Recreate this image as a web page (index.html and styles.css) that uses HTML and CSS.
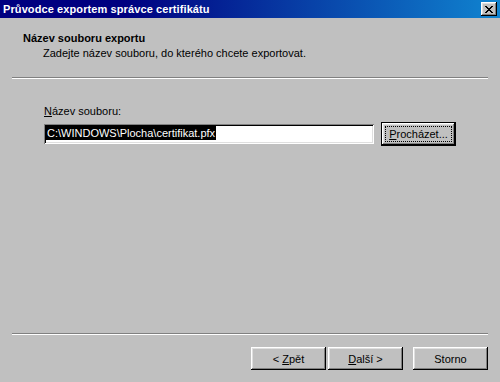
FILE: index.html
```html
<!DOCTYPE html>
<html lang="cs">
<head>
    <meta charset="UTF-8">
    <title>Průvodce exportem správce certifikátu</title>
    <link rel="stylesheet" href="styles.css">
</head>
<body>
    <div class="window">
        <div class="titlebar">
            <span class="title">Průvodce exportem správce certifikátu</span>
            <button class="close-button">
                <svg width="8" height="7" viewBox="0 0 8 7">
                    <path d="M0 0h2v1h1v1h2v-1h1v-1h2v1h-1v1h-1v1h-1v1h1v1h1v1h1v1h-2v-1h-1v-1h-2v1h-1v1h-2v-1h1v-1h1v-1h1v-1h-1v-1h-1v-1h-1z" fill="#000"/>
                </svg>
            </button>
        </div>

        <div class="page-header">
            <div class="header-title">Název souboru exportu</div>
            <div class="header-text">Zadejte název souboru, do kterého chcete exportovat.</div>
        </div>
        <div class="separator"></div>

        <div class="page-content">
            <label class="field-label"><u>N</u>ázev souboru:</label>
            <div class="file-row">
                <div class="text-input"><span class="selected">C:\WINDOWS\Plocha\certifikat.pfx</span></div>
                <button class="button default"><span class="focus"><u>P</u>rocházet...</span></button>
            </div>
        </div>

        <div class="separator"></div>
        <div class="footer">
            <button class="button">&lt; <u>Z</u>pět</button>
            <button class="button"><u>D</u>alší &gt;</button>
            <button class="button cancel">Storno</button>
        </div>
    </div>
</body>
</html>
```

FILE: styles.css
```css
html, body {
    margin: 0;
    height: 100%;
}
body {
    font-family: "Liberation Sans", Arial, sans-serif;
    font-size: 11px;
    line-height: 13px;
    color: #000;
    background: #c0c0c0;
}
.window {
    height: 382px;
    display: flex;
    flex-direction: column;
    background: #c0c0c0;
}
.titlebar {
    height: 18px;
    flex: none;
    display: flex;
    align-items: center;
    justify-content: space-between;
    padding: 0 3px;
    background: linear-gradient(90deg, #000080 0%, #000080 25%, #1084d0 100%);
}
.title {
    color: #fff;
    font-weight: bold;
    font-size: 11px;
    letter-spacing: 0.1px;
}
.close-button {
    width: 16px;
    height: 14px;
    padding: 0;
    border: none;
    background: #c0c0c0;
    display: flex;
    align-items: center;
    justify-content: center;
    box-shadow: inset -1px -1px #000, inset 1px 1px #fff, inset -2px -2px #808080, inset 2px 2px #dfdfdf;
}
.page-header {
    height: 59px;
    box-sizing: border-box;
    padding: 14px 0 0 23px;
    flex: none;
}
.header-title {
    font-weight: bold;
}
.header-text {
    margin-top: 2px;
    padding-left: 20px;
}
.separator {
    flex: none;
    margin: 0 12px;
    border-top: 1px solid #808080;
    border-bottom: 1px solid #fff;
    height: 0;
}
.page-content {
    flex: 1;
    padding: 26px 0 0 44px;
}
.field-label {
    display: block;
    margin-bottom: 4px;
}
.file-row {
    display: flex;
    align-items: center;
    gap: 7px;
}
.text-input {
    width: 330px;
    height: 20px;
    box-sizing: border-box;
    background: #fff;
    padding: 2px 0 0 2px;
    box-shadow: inset 1px 1px #808080, inset -1px -1px #fff, inset 2px 2px #000, inset -2px -2px #dfdfdf;
}
.selected {
    display: inline-block;
    background: #000;
    color: #fff;
    height: 14px;
    line-height: 14px;
    padding: 0 1px;
}
.button {
    width: 75px;
    height: 23px;
    padding: 0;
    border: none;
    background: #c0c0c0;
    font-family: inherit;
    font-size: 11px;
    color: #000;
    box-shadow: inset -1px -1px #000, inset 1px 1px #fff, inset -2px -2px #808080, inset 2px 2px #dfdfdf;
}
.button.default {
    height: 24px;
    border: 1px solid #000;
    box-sizing: border-box;
    display: flex;
    align-items: center;
    justify-content: center;
}
.focus {
    display: block;
    width: 65px;
    height: 14px;
    line-height: 14px;
    outline: 1px dotted #000;
}
.footer {
    flex: none;
    height: 47px;
    box-sizing: border-box;
    padding: 12px 12px 0 0;
    display: flex;
    justify-content: flex-end;
    gap: 2px;
}
.button.cancel {
    margin-left: 8px;
}
```
